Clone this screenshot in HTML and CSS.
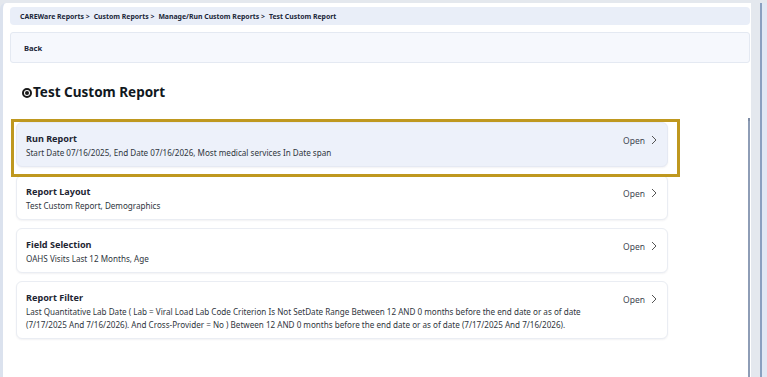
FILE: index.html
```html
<!DOCTYPE html>
<html lang="en">
<head>
<meta charset="utf-8">
<title>Test Custom Report</title>
<link rel="stylesheet" href="styles.css">
</head>
<body>
<div class="window">
  <div class="frame">
    <nav class="crumbs">
      <span>CAREWare Reports &gt;</span>
      <span>Custom Reports &gt;</span>
      <span>Manage/Run Custom Reports &gt;</span>
      <span>Test Custom Report</span>
    </nav>
    <div class="backbar"><span class="back">Back</span></div>
    <div class="content">
      <div class="main">
        <h1 class="title"><span class="ticon"></span>Test Custom Report</h1>
        <div class="cards">
          <div class="card active">
            <div class="card-body">
              <div class="card-title">Run Report</div>
              <div class="card-sub">Start Date 07/16/2025, End Date 07/16/2026, Most medical services In Date span</div>
            </div>
            <div class="open">Open <svg class="chev" viewBox="0 0 6 10" width="6" height="10"><path d="M1 1 L5 5 L1 9" fill="none" stroke="#555" stroke-width="1"/></svg></div>
          </div>
          <div class="card">
            <div class="card-body">
              <div class="card-title">Report Layout</div>
              <div class="card-sub">Test Custom Report, Demographics</div>
            </div>
            <div class="open">Open <svg class="chev" viewBox="0 0 6 10" width="6" height="10"><path d="M1 1 L5 5 L1 9" fill="none" stroke="#555" stroke-width="1"/></svg></div>
          </div>
          <div class="card">
            <div class="card-body">
              <div class="card-title">Field Selection</div>
              <div class="card-sub">OAHS Visits Last 12 Months, Age</div>
            </div>
            <div class="open">Open <svg class="chev" viewBox="0 0 6 10" width="6" height="10"><path d="M1 1 L5 5 L1 9" fill="none" stroke="#555" stroke-width="1"/></svg></div>
          </div>
          <div class="card">
            <div class="card-body">
              <div class="card-title">Report Filter</div>
              <div class="card-sub">Last Quantitative Lab Date ( Lab = Viral Load Lab Code Criterion Is Not SetDate Range Between 12 AND 0 months before the end date or as of date (7/17/2025 And 7/16/2026). And Cross-Provider = No ) Between 12 AND 0 months before the end date or as of date (7/17/2025 And 7/16/2026).</div>
            </div>
            <div class="open">Open <svg class="chev" viewBox="0 0 6 10" width="6" height="10"><path d="M1 1 L5 5 L1 9" fill="none" stroke="#555" stroke-width="1"/></svg></div>
          </div>
          <div class="highlight"></div>
        </div>
      </div>
      <div class="inner-scroll"></div>
    </div>
  </div>
  <div class="outer-scroll"></div>
</div>
</body>
</html>
```

FILE: styles.css
```css
* { box-sizing: border-box; }
html, body { margin: 0; padding: 0; }
body {
  background: #ffffff;
  font-family: "Noto Sans", "Open Sans", sans-serif;
  color: #1e2633;
  width: 767px;
  height: 377px;
  overflow: hidden;
}
.window {
  display: flex;
  height: 377px;
  background: #e4e8ee;
  padding-top: 3px;
}
.frame {
  flex: 1;
  background: #ffffff;
  border-left: 3px solid #dbe2ee;
  border-top-left-radius: 6px;
  padding: 4px 0 0 7px;
  display: flex;
  flex-direction: column;
  min-width: 0;
}
.crumbs {
  width: 740px;
  height: 18px;
  background: #e9eef8;
  border-radius: 4px;
  padding: 0 10px;
  display: flex;
  align-items: center;
  gap: 4px;
  font-size: 6.9px;
  font-weight: 700;
  color: #1a2638;
}
.backbar {
  margin-top: 7px;
  width: 740px;
  height: 31px;
  background: #f6f8fd;
  border: 1px solid #e4e9f2;
  border-radius: 3px;
  display: flex;
  align-items: center;
  padding-left: 13px;
}
.back {
  font-size: 7.6px;
  font-weight: 700;
  color: #1a2638;
}
.content {
  flex: 1;
  display: flex;
  min-height: 0;
}
.main {
  width: 738px;
  padding-left: 6px;
}
.title {
  margin: 19px 0 0 6px;
  height: 20px;
  display: flex;
  align-items: center;
  font-size: 13.5px;
  font-weight: 700;
  color: #111820;
}
.ticon {
  width: 10px;
  height: 10px;
  border-radius: 50%;
  border: 2px solid #1a1a1a;
  margin-right: 1px;
  margin-top: 2px;
  position: relative;
  display: inline-block;
}
.ticon::after {
  content: "";
  position: absolute;
  left: 1px;
  top: 1px;
  width: 4px;
  height: 4px;
  border-radius: 50%;
  background: #1a1a1a;
}
.cards {
  position: relative;
  margin-top: 20px;
  width: 652px;
  display: flex;
  flex-direction: column;
  gap: 8px;
}
.card {
  display: flex;
  align-items: flex-start;
  background: #ffffff;
  border: 1px solid #eaedf3;
  border-radius: 6px;
  box-shadow: 0 1px 2px rgba(30, 40, 70, 0.06);
  padding: 9px 10px 7px 9px;
}
.card.active {
  background: #edf1fa;
  border-color: #e5e9f3;
}
.card-body { flex: 1; min-width: 0; }
.card-title {
  font-size: 9.1px;
  font-weight: 700;
  line-height: 14px;
  color: #1e2633;
}
.card-sub {
  font-size: 8.1px;
  line-height: 13px;
  color: #2f3640;
}
.open {
  display: flex;
  align-items: center;
  gap: 6px;
  height: 14px;
  margin-left: 12px;
  font-size: 8.5px;
  color: #3e4550;
  white-space: nowrap;
  margin-top: 1px;
}
.chev { display: block; }
.highlight {
  position: absolute;
  left: -5px;
  top: -3px;
  width: 669px;
  height: 58px;
  border: 3px solid #bf981f;
  pointer-events: none;
}
.inner-scroll {
  width: 2px;
  margin-top: 55px;
  background: #8e9db6;
  border-top: 3px solid #7d8ca6;
}
.outer-scroll {
  width: 7px;
  background: #e1e8f4;
  border-left: 2px solid #8aa0c0;
  margin-left: 9px;
}
```
